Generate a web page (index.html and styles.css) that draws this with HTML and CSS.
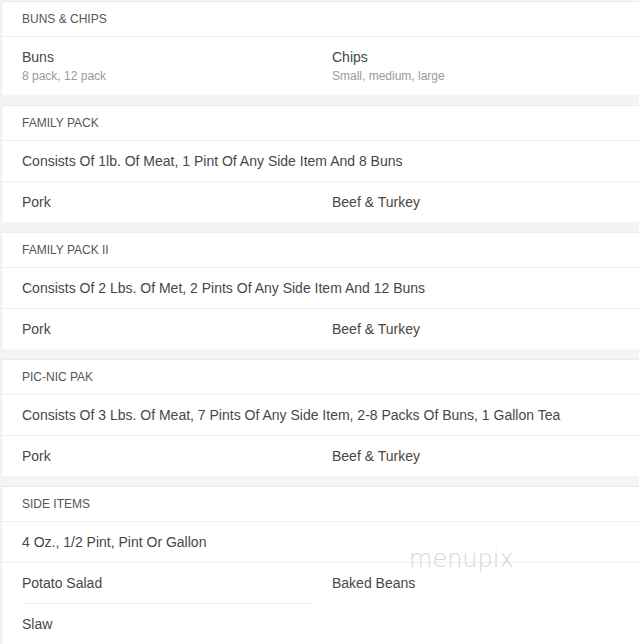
FILE: index.html
```html
<!DOCTYPE html>
<html lang="en">

<head>
  <meta charset="UTF-8" />
  <meta name="viewport" content="width=device-width, initial-scale=1.0" />
  <title>Menu</title>
  <link rel="stylesheet" href="styles.css">
</head>

<body>
  <div class="menu">
    <div class="section">
      <div class="section-title">BUNS &amp; CHIPS</div>
      <div class="items">
        <div class="item">
          <div class="item-name">Buns</div>
          <div class="item-desc">8 pack, 12 pack</div>
        </div>
        <div class="item">
          <div class="item-name">Chips</div>
          <div class="item-desc">Small, medium, large</div>
        </div>
      </div>
    </div>

    <div class="section">
      <div class="section-title">FAMILY PACK</div>
      <div class="section-desc">Consists Of 1lb. Of Meat, 1 Pint Of Any Side Item And 8 Buns</div>
      <div class="items">
        <div class="item"><div class="item-name">Pork</div></div>
        <div class="item"><div class="item-name">Beef &amp; Turkey</div></div>
      </div>
    </div>

    <div class="section">
      <div class="section-title">FAMILY PACK II</div>
      <div class="section-desc">Consists Of 2 Lbs. Of Met, 2 Pints Of Any Side Item And 12 Buns</div>
      <div class="items">
        <div class="item"><div class="item-name">Pork</div></div>
        <div class="item"><div class="item-name">Beef &amp; Turkey</div></div>
      </div>
    </div>

    <div class="section">
      <div class="section-title">PIC-NIC PAK</div>
      <div class="section-desc">Consists Of 3 Lbs. Of Meat, 7 Pints Of Any Side Item, 2-8 Packs Of Buns, 1 Gallon Tea</div>
      <div class="items">
        <div class="item"><div class="item-name">Pork</div></div>
        <div class="item"><div class="item-name">Beef &amp; Turkey</div></div>
      </div>
    </div>

    <div class="section">
      <div class="section-title">SIDE ITEMS</div>
      <div class="section-desc">4 Oz., 1/2 Pint, Pint Or Gallon</div>
      <div class="items">
        <div class="item item-lined"><div class="item-name">Potato Salad</div></div>
        <div class="item"><div class="item-name">Baked Beans</div></div>
        <div class="item"><div class="item-name">Slaw</div></div>
      </div>
      <div class="watermark">menupix</div>
    </div>
  </div>
</body>

</html>
```

FILE: styles.css
```css
:root {
  --page-bg: #f4f4f4;
  --card-bg: #ffffff;
  --line: #efefef;
  --title: #555;
  --text: #474747;
  --muted: #9a9a9a;
}

* {
  box-sizing: border-box;
}

body {
  margin: 0;
  padding: 1px 0 0 1px;
  background: var(--page-bg);
  font-family: 'Liberation Sans', Arial, sans-serif;
  color: var(--text);
  overflow: hidden;
}

.menu {
  width: 642px;
}

.section {
  position: relative;
  background: var(--card-bg);
  border: 1px solid #ececec;
  border-bottom: none;
  border-right: none;
  margin-bottom: 10px;
}

.section-title {
  font-size: 12px;
  line-height: 14px;
  color: var(--title);
  padding: 10px 20px;
  border-bottom: 1px solid var(--line);
}

.section-desc {
  font-size: 14px;
  line-height: 20px;
  padding: 10px 20px;
  border-bottom: 1px solid var(--line);
}

.items {
  display: grid;
  grid-template-columns: 290px 290px;
  column-gap: 20px;
  padding: 0 20px;
}

.item {
  padding: 10px 0;
}

.item-lined {
  border-bottom: 1px solid var(--line);
}

.item-name {
  font-size: 14px;
  line-height: 20px;
}

.item-desc {
  font-size: 12px;
  line-height: 17px;
  padding-top: 1px;
  color: var(--muted);
}

.watermark {
  position: absolute;
  left: 407px;
  top: 58px;
  font-family: 'DejaVu Sans', sans-serif;
  font-weight: 200;
  font-size: 24px;
  line-height: 28px;
  color: #d6d6d6;
}
```
